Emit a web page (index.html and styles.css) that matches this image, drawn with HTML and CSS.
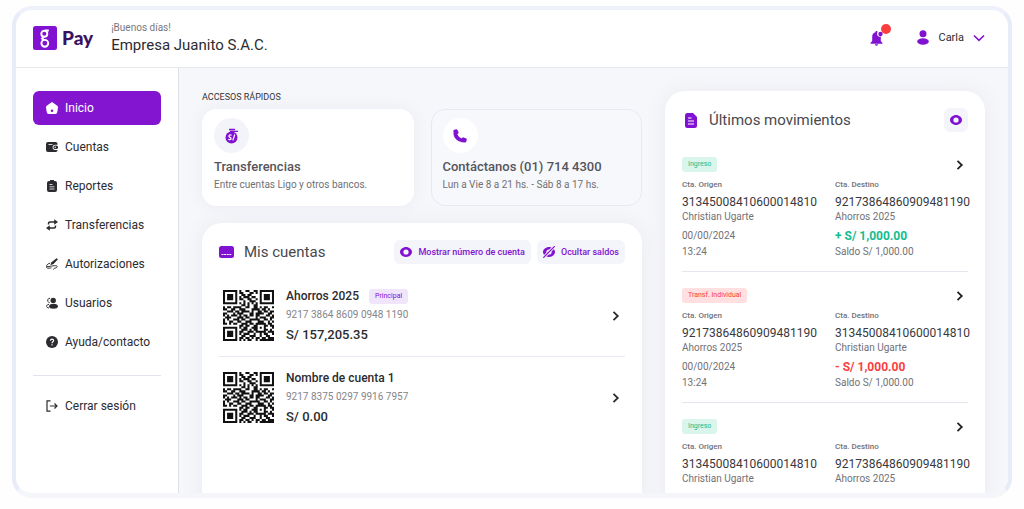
FILE: index.html
```html
<!DOCTYPE html>
<html lang="es">
<head>
    <meta charset="UTF-8">
    <meta name="viewport" content="width=device-width, initial-scale=1.0">
    <title>Pay - Inicio</title>
    <link rel="stylesheet" href="styles.css">
</head>
<body>
    <svg class="sprite" aria-hidden="true">
        <symbol id="eye" viewBox="0 0 12 12">
            <path fill="currentColor" fill-rule="evenodd" d="M6 1C3 1 0 3.400 0 6s3 5 6 5 6-2.400 6-5-3-5-6-5zm0 2.400a2.600 2.600 0 1 1 0 5.200 2.600 2.600 0 0 1 0-5.200z"/>
        </symbol>
        <symbol id="chevron" viewBox="0 0 8 12">
            <path fill="none" stroke="currentColor" stroke-width="1.800" d="M1.500 1.800 5.800 6 1.500 10.200"/>
        </symbol>
    </svg>

    <div class="app">
        <header class="header">
            <a class="logo" href="#" aria-label="Pay">
                <svg width="24" height="24" viewBox="0 0 24 24">
                    <rect width="24" height="24" rx="2.500" fill="#8212d2"/>
                    <g fill="none" stroke="#fff" stroke-width="1.900">
                        <circle cx="11.300" cy="7.700" r="3"/>
                        <circle cx="11.800" cy="17.300" r="3.400"/>
                        <path d="M12 4.500h3.800M10.500 10.800 9 12.500 11 14"/>
                    </g>
                </svg>
                <span>Pay</span>
            </a>
            <div class="greeting">
                <p>¡Buenos días!</p>
                <h1>Empresa Juanito S.A.C.</h1>
            </div>
            <div class="header-actions">
                <button class="bell" aria-label="Notificaciones">
                    <svg width="14" height="16" viewBox="0 0 14 16" fill="#8212d2">
                        <path d="M6.500 1c.6 0 1 .4 1 1A3 3 0 0 0 10.800 6.600V11l1.700 2v.7H.5V13l1.700-2V6.500C2.200 4.300 3.500 2.700 5.500 2.200V2c0-.6.4-1 1-1zM5 14.300h3c0 .9-.6 1.500-1.500 1.500S5 15.200 5 14.300z"/>
                        <circle cx="10.500" cy="4" r="2.200"/>
                    </svg>
                    <span class="bell-dot"></span>
                </button>
                <button class="user">
                    <svg width="12" height="15" viewBox="0 0 12 15" fill="#8212d2">
                        <circle cx="6" cy="3.800" r="3.500"/>
                        <ellipse cx="6" cy="11.500" rx="5.800" ry="3.200"/>
                    </svg>
                    <span>Carla</span>
                    <svg width="12" height="8" viewBox="0 0 12 8">
                        <path fill="none" stroke="#8212d2" stroke-width="1.600" d="M1 1.500 6 6.300 11 1.500"/>
                    </svg>
                </button>
            </div>
        </header>

        <div class="body">
            <nav class="sidebar">
                <ul class="menu">
                    <li><a class="active" href="#">
                        <svg viewBox="0 0 12 12"><path fill="currentColor" fill-rule="evenodd" d="M6 0 11 3.500Q12 4.200 12 5.500L11.300 10Q11 12 9.500 12H2.500Q1 12 .7 10L0 5.500Q0 4.200 1 3.500zM6 7.500A1.300 1.300 0 0 0 6 10.100 1.300 1.300 0 0 0 6 7.500z"/></svg>
                        Inicio</a></li>
                    <li><a href="#">
                        <svg viewBox="0 0 12 12"><path fill="currentColor" d="M2 1h7.500q2 0 2 1.500v1.200H9.200a2.600 2.600 0 0 0 0 5.200h2.400V9q0 2-2 2H2Q0 11 0 9V3q0-2 2-2z"/><path stroke="#fff" stroke-width=".8" d="M2.500 3.500h4"/><rect x="7.500" y="4.600" width="4.500" height="3.400" rx="1.600" fill="currentColor"/><circle cx="9.200" cy="6.300" r=".7" fill="#fff"/></svg>
                        Cuentas</a></li>
                    <li><a href="#">
                        <svg viewBox="0 0 12 12"><path fill="currentColor" d="M3 1h1V.5Q4 0 4.500 0h3Q8 0 8 .5V1h1q2 0 2 2v7q0 2-2 2H3q-2 0-2-2V3q0-2 2-2z"/><path stroke="#fff" stroke-width=".8" d="M3.500 4.500h3M3.500 6.800h5M3.500 9h5"/></svg>
                        Reportes</a></li>
                    <li><a href="#">
                        <svg viewBox="0 0 12 12"><path fill="none" stroke="currentColor" stroke-width="1.500" d="M2.500 5.500V4.500Q2.500 3 4 3H9M9.500 6.500v1q0 1.500-1.500 1.500H3"/><path fill="currentColor" d="M8.200.3 12 3 8.200 5.700zM3.800 6.300 0 9l3.800 2.700z"/></svg>
                        Transferencias</a></li>
                    <li><a href="#">
                        <svg viewBox="0 0 12 12"><path fill="currentColor" d="M10.500.2 12 1.200 7.500 6 4.200 7.200 5.500 4.200z"/><path fill="none" stroke="currentColor" stroke-width="1" d="M4 5.200C1.500 5.800.2 7.400.8 8.300c.8 1 5.500-.8 8.700-.6 2.500.2 2 1.600.4 2.200-1 .4-2 .1-2.400 1.600M.8 8.300C-.5 10.500 3 10.500 5.500 9.800"/></svg>
                        Autorizaciones</a></li>
                    <li><a href="#">
                        <svg viewBox="0 0 12 12"><g fill="currentColor"><circle cx="7.200" cy="3.400" r="2.700"/><ellipse cx="7.500" cy="9.300" rx="4.400" ry="2.500"/></g><path fill="none" stroke="currentColor" stroke-width="1" d="M4 1.200C1 1.200 1 5.400 3.600 5.600M3 7.300C-.2 7.600-.2 10.800 3 11"/></svg>
                        Usuarios</a></li>
                    <li><a href="#">
                        <svg viewBox="0 0 12 12"><circle cx="6" cy="6" r="6" fill="currentColor"/><path fill="none" stroke="#fff" stroke-width="1.200" d="M4.500 4.800C4.500 2.600 7.600 2.700 7.600 4.600 7.600 5.800 6 5.800 6 7.300M6 8.200v1.300"/></svg>
                        Ayuda/contacto</a></li>
                </ul>
                <a class="logout" href="#">
                    <svg viewBox="0 0 12 12" fill="none" stroke="currentColor" stroke-width="1.200"><path d="M4.500.8H1v10.400h3.500M3.800 6H11M8.500 3.500 11 6 8.500 8.500"/></svg>
                    Cerrar sesión</a>
            </nav>

            <main class="content">
                <div class="main-column">
                    <h2 class="section-title">ACCESOS RÁPIDOS</h2>
                    <div class="shortcuts">
                        <a class="shortcut" href="#">
                            <span class="shortcut-icon">
                                <svg width="14" height="16" viewBox="0 0 14 16">
                                    <circle cx="6.500" cy="9.500" r="6" fill="#8212d2"/>
                                    <path fill="none" stroke="#8212d2" stroke-width="1.300" d="M4 1.500h6M5 3.300h8"/>
                                    <path fill="none" stroke="#fff" stroke-width="1.200" d="M6.600 7.300C4.200 6 2.900 8.400 5 9.400s1 3.200-1.700 1.900M9.800 6.500 7.800 12.400"/>
                                </svg>
                            </span>
                            <strong>Transferencias</strong>
                            <span>Entre cuentas Ligo y otros bancos.</span>
                        </a>
                        <a class="shortcut outlined" href="#">
                            <span class="shortcut-icon">
                                <svg width="14" height="14" viewBox="0 0 14 14">
                                    <path fill="#8212d2" d="M1.200.8 3.300.2Q4 0 4.400.8L5.500 3.300Q5.700 4 5.200 4.400L4.300 5.200Q5.500 8.100 8.700 9.600L9.600 8.600Q10 8.200 10.700 8.400L13.200 9.500Q14 9.900 13.800 10.600L13.200 12.800Q13 13.500 12.200 13.500 5 13.500 1.600 8.500.2 6 .4 1.800.5 1 1.200.8z"/>
                                </svg>
                            </span>
                            <strong>Contáctanos (01) 714 4300</strong>
                            <span>Lun a Vie 8 a 21 hs. - Sáb 8 a 17 hs.</span>
                        </a>
                    </div>

                    <section class="card accounts">
                        <div class="card-header">
                            <svg width="15" height="12" viewBox="0 0 15 12"><rect width="15" height="12" rx="2.500" fill="#8212d2"/><path stroke="#fff" stroke-width="1" stroke-dasharray="2 .6" d="M2.500 8.500h10"/></svg>
                            <h2>Mis cuentas</h2>
                            <div class="card-buttons">
                                <button class="soft-button"><svg width="12" height="12"><use href="#eye"/></svg>Mostrar número de cuenta</button>
                                <button class="soft-button">
                                    <svg width="12" height="12" viewBox="0 0 12 12"><use href="#eye"/><path stroke="#f4f5fa" stroke-width="3" d="M.5 11.500 11.500.5"/><path stroke="#8212d2" stroke-width="1.200" d="M.3 11.700 11.700.3"/></svg>
                                    Ocultar saldos</button>
                            </div>
                        </div>
                        <a class="account" href="#">
                            <svg class="qr" viewBox="0 0 25 25" role="img" aria-label="Código QR"></svg>
                            <div class="account-info">
                                <h3>Ahorros 2025 <span class="tag purple">Principal</span></h3>
                                <p>9217 3864 8609 0948 1190</p>
                                <strong>S/ 157,205.35</strong>
                            </div>
                            <svg class="chevron" width="8" height="12"><use href="#chevron"/></svg>
                        </a>
                        <a class="account" href="#">
                            <svg class="qr" viewBox="0 0 25 25" role="img" aria-label="Código QR"></svg>
                            <div class="account-info">
                                <h3>Nombre de cuenta 1</h3>
                                <p>9217 8375 0297 9916 7957</p>
                                <strong>S/ 0.00</strong>
                            </div>
                            <svg class="chevron" width="8" height="12"><use href="#chevron"/></svg>
                        </a>
                    </section>
                </div>

                <section class="card movements">
                    <div class="card-header">
                        <svg width="12" height="15" viewBox="0 0 12 15"><path fill="#8212d2" d="M2.500 0H8l4 4v8.500Q12 15 9.500 15h-7Q0 15 0 12.500v-10Q0 0 2.500 0z"/><path stroke="#fff" stroke-width="1" d="M3 5h3.500M3 8h6M3 11h6"/></svg>
                        <h2>Últimos movimientos</h2>
                        <button class="eye-button" aria-label="Mostrar saldos"><svg width="12" height="12"><use href="#eye"/></svg></button>
                    </div>

                    <a class="movement" href="#">
                        <div class="movement-top"><span class="tag green">Ingreso</span><svg class="chevron" width="8" height="12"><use href="#chevron"/></svg></div>
                        <div class="movement-data">
                            <div>
                                <h4>Cta. Origen</h4>
                                <p class="number">31345008410600014810</p>
                                <p>Christian Ugarte</p>
                                <p class="date">00/00/2024</p>
                                <p>13:24</p>
                            </div>
                            <div>
                                <h4>Cta. Destino</h4>
                                <p class="number">92173864860909481190</p>
                                <p>Ahorros 2025</p>
                                <p class="amount income">+ S/ 1,000.00</p>
                                <p>Saldo S/ 1,000.00</p>
                            </div>
                        </div>
                    </a>

                    <a class="movement" href="#">
                        <div class="movement-top"><span class="tag red">Transf. Individual</span><svg class="chevron" width="8" height="12"><use href="#chevron"/></svg></div>
                        <div class="movement-data">
                            <div>
                                <h4>Cta. Origen</h4>
                                <p class="number">92173864860909481190</p>
                                <p>Ahorros 2025</p>
                                <p class="date">00/00/2024</p>
                                <p>13:24</p>
                            </div>
                            <div>
                                <h4>Cta. Destino</h4>
                                <p class="number">31345008410600014810</p>
                                <p>Christian Ugarte</p>
                                <p class="amount expense">- S/ 1,000.00</p>
                                <p>Saldo S/ 1,000.00</p>
                            </div>
                        </div>
                    </a>

                    <a class="movement" href="#">
                        <div class="movement-top"><span class="tag green">Ingreso</span><svg class="chevron" width="8" height="12"><use href="#chevron"/></svg></div>
                        <div class="movement-data">
                            <div>
                                <h4>Cta. Origen</h4>
                                <p class="number">31345008410600014810</p>
                                <p>Christian Ugarte</p>
                            </div>
                            <div>
                                <h4>Cta. Destino</h4>
                                <p class="number">92173864860909481190</p>
                                <p>Ahorros 2025</p>
                            </div>
                        </div>
                    </a>
                </section>
            </main>
        </div>
    </div>

    <script src="qr.js"></script>
</body>
</html>
```
FILE: styles.css
```css
* {
    box-sizing: border-box;
}

body {
    font-family: Roboto, "Liberation Sans", sans-serif;
    font-size: 12px;
    color: #2b2b30;
    background-color: #fefefe;
    margin: 0;
}

h1, h2, h3, h4, p, ul {
    margin: 0;
    padding: 0;
    font-weight: 400;
}

a {
    color: inherit;
    text-decoration: none;
}

button {
    font-family: inherit;
    color: inherit;
    background: none;
    border: none;
    padding: 0;
    cursor: pointer;
}

svg {
    flex: none;
}

.sprite {
    display: none;
}

.app {
    display: flex;
    flex-direction: column;
    height: calc(100vh - 17px);
    margin: 6px 12px 0;
    border: 4px solid #e8ebf8;
    border-top: 4px solid #eff1fa;
    border-bottom: 5px solid #f5f6f9;
    border-radius: 20px;
    background-color: #fff;
    overflow: hidden;
}

/* Header */
.header {
    display: flex;
    align-items: center;
    padding: 10px 23px 12px 17px;
    border-bottom: 1px solid #e6e7ec;
}

.logo {
    display: flex;
    align-items: center;
    gap: 5px;
    margin-right: 18px;
    font-family: Lato, sans-serif;
    font-size: 19px;
    line-height: 24px;
    font-weight: 900;
    color: #3a1060;
}

.greeting p {
    font-size: 10px;
    line-height: 15px;
    color: #77777d;
}

.greeting h1 {
    font-size: 15px;
    line-height: 20px;
}

.header-actions {
    display: flex;
    align-items: center;
    gap: 33px;
    margin-left: auto;
}

.bell {
    position: relative;
    display: flex;
}

.bell-dot {
    position: absolute;
    top: -6px;
    right: -7px;
    width: 10px;
    height: 10px;
    border-radius: 50%;
    background-color: #fb3e3e;
}

.user {
    display: flex;
    align-items: center;
    gap: 9px;
    font-size: 11px;
}

/* Sidebar */
.body {
    display: flex;
    flex: 1;
    min-height: 0;
}

.sidebar {
    width: 163px;
    flex: none;
    padding: 23px 17px;
    border-right: 1px solid #dfe0e4;
}

.menu {
    display: grid;
    gap: 5px;
    list-style: none;
    padding-bottom: 16px;
    border-bottom: 1px solid #e2e3ec;
}

.menu a, .logout {
    display: flex;
    align-items: center;
    gap: 7px;
    height: 34px;
    padding-left: 13px;
    border-radius: 6px;
}

.menu svg, .logout svg {
    width: 12px;
    height: 12px;
}

.menu .active {
    background-color: #8315d0;
    color: #fff;
}

.logout {
    margin-top: 13px;
}

/* Content */
.content {
    display: grid;
    grid-template-columns: minmax(0, 11fr) minmax(0, 8fr);
    gap: 23px;
    flex: 1;
    min-width: 0;
    padding: 23px 23px 0;
    background-color: #f6f7fa;
}

.main-column {
    display: flex;
    flex-direction: column;
    min-height: 0;
}

.section-title {
    font-size: 9px;
    line-height: 12px;
    margin-bottom: 6px;
}

.shortcuts {
    display: grid;
    grid-template-columns: 1fr 1fr;
    gap: 17px;
    margin-bottom: 17px;
}

.shortcut {
    display: flex;
    flex-direction: column;
    padding: 8px 11px 12px;
    border: 1px solid #fff;
    border-radius: 14px;
    background-color: #fff;
    box-shadow: 0 0 16px #e9ebf2;
    font-size: 10px;
    line-height: 16px;
    color: #707076;
}

.shortcut.outlined {
    border-color: #e6e8f3;
    background-color: #f7f8fb;
    box-shadow: none;
}

.shortcut strong {
    font-size: 13px;
    font-weight: 500;
    line-height: 20px;
    color: #55555b;
}

.shortcut-icon {
    display: flex;
    align-items: center;
    justify-content: center;
    width: 35px;
    height: 35px;
    margin-bottom: 4px;
    border-radius: 50%;
    background-color: #f3f4f9;
}

.outlined .shortcut-icon {
    background-color: #fff;
}

.card {
    background-color: #fff;
    border-radius: 20px 20px 0 0;
    box-shadow: 0 0 20px #e8eaf1;
    padding: 17px;
}

.accounts {
    flex: 1;
}

.card-header {
    display: flex;
    align-items: center;
    gap: 10px;
}

.card-header h2 {
    font-size: 15px;
    color: #48484e;
}

.card-buttons {
    display: flex;
    gap: 6px;
    margin-left: auto;
}

.soft-button {
    display: flex;
    align-items: center;
    gap: 6px;
    height: 24px;
    padding: 0 6px;
    border-radius: 6px;
    background-color: #f4f5fa;
    font-size: 9px;
    font-weight: 500;
    color: #8212d2;
}

.account {
    display: flex;
    align-items: center;
    gap: 12px;
    padding: 13px 5px 13px 4px;
}

.accounts .card-header {
    margin-bottom: 11px;
}

.account + .account {
    border-top: 1px solid #e8e9f2;
}

.qr {
    width: 51px;
    height: 51px;
}

.account-info h3 {
    display: flex;
    align-items: center;
    gap: 10px;
    font-size: 12px;
    font-weight: 500;
    line-height: 16px;
}

.account-info p {
    font-size: 10px;
    line-height: 22px;
    color: #85858a;
}

.account-info strong {
    display: block;
    font-size: 13px;
    font-weight: 500;
    line-height: 17px;
}

.account .chevron {
    margin-left: auto;
}

.tag {
    padding: 0 6px;
    border-radius: 3px;
    font-size: 7px;
    font-weight: 400;
    line-height: 15px;
}

.purple {
    background-color: #f1e5fb;
    color: #8212d2;
}

.green {
    background-color: #d9f5ec;
    color: #12bd8e;
}

.red {
    background-color: #ffdfdf;
    color: #fb3e3e;
}

/* Movements */
.movements .card-header {
    gap: 12px;
    margin-bottom: 9px;
    padding-left: 3px;
}

.eye-button {
    display: flex;
    align-items: center;
    justify-content: center;
    width: 24px;
    height: 24px;
    margin-left: auto;
    border-radius: 6px;
    background-color: #f4f5fa;
    color: #8212d2;
}

.movement {
    display: block;
    padding: 16px 0 11px;
    font-size: 10px;
    line-height: 16px;
    color: #717177;
}

.movement + .movement {
    border-top: 1px solid #e4e6f0;
}

.movement-top {
    display: flex;
    align-items: center;
    justify-content: space-between;
    padding-right: 4px;
    color: #222;
}

.movement-data {
    display: grid;
    grid-template-columns: 153px 1fr;
    margin-top: 4px;
}

.movement-data h4 {
    font-size: 8px;
    font-weight: 500;
    line-height: 17px;
}

.movement-data .number {
    font-size: 12px;
    line-height: 18px;
    color: #38383d;
}

.movement-data .number + p {
    line-height: 11px;
}

.movement-data .date, .movement-data .amount {
    margin-top: 6px;
}

.amount {
    font-size: 12px;
    font-weight: 700;
}

.income {
    color: #12bd8e;
}

.expense {
    color: #fb3e3e;
}
```
FILE: qr.js
```js
const qrRows = [
    "1111111010011001101111111",
    "1000001011000110101000001",
    "1011101001101100001011101",
    "1011101010111011001011101",
    "1011101011001100101011101",
    "1000001000100111001000001",
    "1111111010101010101111111",
    "0000000001101001100000000",
    "1011011110011001101011001",
    "1100110011100011110110100",
    "0011101101111010011011011",
    "1100010111000110111100110",
    "1010111010110110110001101",
    "0111000111011000101110011",
    "1010011101100111110011010",
    "1001100110011100011100101",
    "1101011001110110111110110",
    "0000000011011001100011011",
    "1111111010110011101010001",
    "1000001001110101100011010",
    "1011101011001110111110111",
    "1011101010111001001011001",
    "1011101001100111001001100",
    "1000001011011010110110111",
    "1111111010101100101111111"
];

// one square per dark module
let path = "";
qrRows.forEach((row, y) => {
    for (let x = 0; x < row.length; x++) {
        if (row[x] === "1") path += `M${x} ${y}h1v1h-1z`;
    }
});

document.querySelectorAll(".qr").forEach(qr => {
    qr.innerHTML = `<path fill="#111" d="${path}"/>`;
});
```
